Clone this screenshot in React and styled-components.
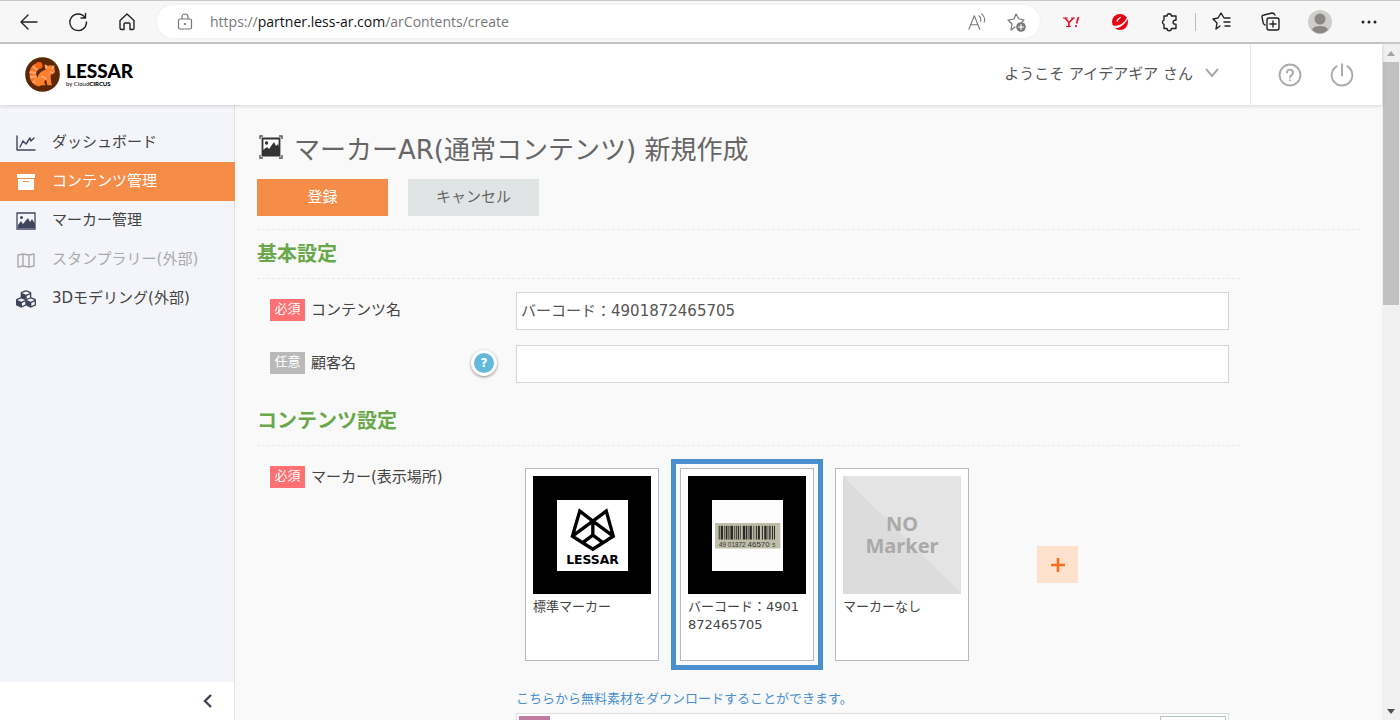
import { useState } from "react";
import styled, { createGlobalStyle } from "styled-components";
import { FaCubes } from "react-icons/fa";

const GlobalStyle = createGlobalStyle`
  * {
    box-sizing: border-box;
  }
  body {
    margin: 0;
    background: #f9f9f9;
    color: #444;
    font-family: "DejaVu Sans", "Noto Sans CJK JP", sans-serif;
    font-size: 15px;
  }
  button,
  input {
    font-family: inherit;
  }
`;

const Window = styled.div`
  display: flex;
  flex-direction: column;
  height: 100vh;
  overflow: hidden;
`;

/* ---------- browser bar ---------- */

const BrowserBar = styled.div`
  flex: none;
  display: flex;
  align-items: center;
  height: 44px;
  padding: 0 19px 0 17px;
  background: #f7f7f7;
  border-top: 1px solid #c8c8c8;
  border-bottom: 2px solid #c8c8c8;
`;

const BarGroup = styled.div`
  display: flex;
  align-items: center;
  gap: 25px;
`;

const BarButton = styled.button`
  display: flex;
  align-items: center;
  justify-content: center;
  width: 24px;
  height: 26px;
  padding: 0;
  border: 0;
  background: none;
  color: ${(p) => p.$color || "#222"};
`;

const BarLine = styled.div`
  width: 1px;
  height: 18px;
  margin: 0 14px;
  background: #bbb;
`;

const AddressBar = styled.div`
  flex: 1;
  display: flex;
  align-items: center;
  height: 33px;
  margin: 0 19px 0 18px;
  padding: 0 12px 0 16px;
  border-radius: 17px;
  background: #fff;
  box-shadow: 0 0 3px rgba(0, 0, 0, 0.06);
`;

const Address = styled.span`
  flex: 1;
  margin-left: 13px;
  font-family: "Open Sans", sans-serif;
  font-size: 14px;
  color: #777;

  & b {
    font-weight: 400;
    color: #111;
  }
`;

const AddressIcons = styled.div`
  display: flex;
  gap: 15px;
`;

/* ---------- page frame ---------- */

const Viewport = styled.div`
  flex: 1;
  display: flex;
  min-height: 0;
`;

const Page = styled.div`
  flex: 1;
  display: flex;
  flex-direction: column;
  min-width: 0;
`;

const Header = styled.header`
  flex: none;
  display: flex;
  align-items: center;
  height: 61px;
  padding-left: 25px;
  background: #fff;
  box-shadow: 0 1px 4px rgba(0, 0, 0, 0.15);
  z-index: 1;
`;

const Logo = styled.a`
  display: flex;
  align-items: center;
  gap: 6px;
  margin-right: auto;
  color: #000;
  text-decoration: none;
`;

const LogoText = styled.span`
  display: flex;
  flex-direction: column;
  font-family: Lato, sans-serif;
  font-size: 19px;
  font-weight: 900;
  line-height: 18px;

  & small {
    font-size: 6px;
    line-height: 7px;
    font-weight: 400;
  }
  & small b {
    font-weight: 900;
  }
`;

const UserMenu = styled.button`
  display: flex;
  align-items: center;
  gap: 12px;
  padding: 0 0 4px;
  margin-right: 31px;
  border: 0;
  background: none;
  font-size: 15px;
  color: #555;
`;

const HeaderIcons = styled.div`
  display: flex;
  align-items: center;
  gap: 28px;
  height: 61px;
  padding: 0 28px 0 27px;
  border-left: 1px solid #e6e6e6;
`;

const IconButton = styled.button`
  display: flex;
  padding: 0;
  border: 0;
  background: none;
  color: #aaa;
`;

const Body = styled.div`
  flex: 1;
  display: flex;
  min-height: 0;
`;

const Sidebar = styled.aside`
  flex: none;
  display: flex;
  flex-direction: column;
  width: 235px;
  background: #f4f5fa;
  border-right: 1px solid #dfe0e8;
`;

const Nav = styled.nav`
  flex: 1;
  padding-top: 18px;
`;

const NavItem = styled.a`
  display: flex;
  align-items: center;
  gap: 16px;
  height: 39px;
  margin-right: -1px;
  padding-left: 16px;
  background: ${(p) => (p.$active ? "#f58d48" : "none")};
  color: ${(p) => (p.$active ? "#fff" : p.$dim ? "#aaa" : "#444")};
  line-height: 20px;
  text-decoration: none;

  & span {
    padding-bottom: 2px;
  }
  & svg {
    width: 20px;
    height: 20px;
    color: ${(p) => (p.$active ? "#fff" : p.$dim ? "#aaa" : "#40455c")};
  }
`;

const Collapse = styled.button`
  display: flex;
  align-items: center;
  justify-content: flex-end;
  height: 38px;
  padding: 0 20px;
  border: 0;
  background: #fff;
  color: #40455c;
`;

const Main = styled.main`
  flex: 1;
  min-width: 0;
  padding: 22px 22px 0;
  overflow: hidden;
`;

const Title = styled.h1`
  display: flex;
  align-items: center;
  gap: 11px;
  height: 40px;
  margin: 0 0 12px;
  padding-left: 2px;
  font-size: 26px;
  font-weight: 400;
  color: #666;
`;

const Actions = styled.div`
  display: flex;
  gap: 20px;
  padding-bottom: 13px;
  border-bottom: 1px dashed #e8e8e8;
`;

const Button = styled.button`
  width: 131px;
  height: 37px;
  padding: 0 0 4px;
  border: 0;
  background: ${(p) => (p.$primary ? "#f58d48" : "#e0e4e5")};
  color: ${(p) => (p.$primary ? "#fff" : "#666")};
  font-size: 15px;
`;

/* ---------- form ---------- */

const Section = styled.section`
  max-width: 983px;
`;

const SectionTitle = styled.h2`
  height: 49px;
  margin: 0;
  border-bottom: 1px dashed #e8e8e8;
  font-size: 20px;
  line-height: 49px;
  color: #6aa84c;
`;

const Rows = styled.div`
  display: flex;
  flex-direction: column;
  gap: 15px;
  padding: 13px 11px 14px 13px;
`;

const Row = styled.div`
  display: flex;
  align-items: flex-start;
`;

const RowHead = styled.div`
  flex: none;
  display: flex;
  align-items: center;
  width: 246px;
  height: 36px;
  padding-right: 19px;
  line-height: 20px;
`;

const Badge = styled.span`
  width: 35px;
  height: 22px;
  margin-right: 6px;
  background: ${(p) => (p.$required ? "#ff7072" : "#b9b9b9")};
  color: #fff;
  font-size: 13px;
  line-height: 20px;
  text-align: center;
`;

const Label = styled.label`
  flex: 1;
`;

const Help = styled.button`
  width: 26px;
  height: 26px;
  padding: 0;
  border: 3px solid #fff;
  border-radius: 50%;
  background: #63b9db;
  box-shadow: 0 1px 3px rgba(0, 0, 0, 0.45);
  color: #fff;
  font-size: 12px;
  font-weight: 700;
  line-height: 20px;
`;

const TextInput = styled.input`
  flex: 1;
  min-width: 0;
  height: 38px;
  padding: 0 4px 3px;
  border: 1px solid #d5d5d5;
  background: #fff;
  color: #555;
  font-size: 15px;
`;

const Field = styled.div`
  flex: 1;
  min-width: 0;
`;

const Markers = styled.div`
  display: flex;
  align-items: center;
  gap: 3px;
`;

const Card = styled.button`
  width: 152px;
  padding: 4px;
  border: 5px solid ${(p) => (p.$selected ? "#4a90ce" : "transparent")};
  background: none;
  color: #444;
  font-size: 13px;
  line-height: 18px;
  text-align: left;
`;

const CardBox = styled.span`
  display: block;
  min-height: 193px;
  padding: 7px;
  border: 1px solid #b8b8b8;
  background: #fff;
`;

const CardName = styled.span`
  display: block;
  margin-top: 4px;
  word-break: break-all;
`;

const Thumb = styled.span`
  display: flex;
  flex-direction: column;
  align-items: center;
  justify-content: center;
  height: 118px;
  background: #000;
`;

const NoMarker = styled(Thumb)`
  background: linear-gradient(to top right, #dcdcdc 50%, #e4e4e4 50%);
  color: #aaa;
  font-family: "Noto Sans", sans-serif;
  font-size: 20px;
  font-weight: 700;
  line-height: 22px;
`;

const AddButton = styled.button`
  display: flex;
  align-items: center;
  justify-content: center;
  width: 41px;
  height: 37px;
  margin-left: 56px;
  padding: 0;
  border: 0;
  background: #ffe0cc;
`;

const DownloadLink = styled.a`
  display: block;
  margin-top: 19px;
  font-size: 13px;
  line-height: 20px;
  color: #4a90ce;
  text-decoration: none;
`;

const Material = styled.div`
  display: flex;
  justify-content: space-between;
  height: 60px;
  margin-top: 4px;
  padding: 2px;
  border: 1px solid #ddd;
  background: #fff;
`;

const Swatch = styled.div`
  width: 31px;
  height: 31px;
  background: #c07c9f;
`;

const MaterialButton = styled.button`
  width: 66px;
  height: 36px;
  border: 1px solid #b4c4c6;
  background: #fff;
`;

/* ---------- scroll bar ---------- */

const ScrollTrack = styled.div`
  flex: none;
  display: flex;
  flex-direction: column;
  align-items: center;
  width: 18px;
  background: #f0f0f0;
`;

const ScrollArrow = styled.div`
  display: flex;
  align-items: center;
  justify-content: center;
  height: 18px;
  color: ${(p) => p.$color};
`;

const ScrollRail = styled.div`
  flex: 1;
  width: 16px;
`;

const ScrollThumb = styled.div`
  height: 38%;
  background: #c1c1c1;
`;

function Stroke({ size = 20, width = 1.4, children }) {
  return (
    <svg
      width={size}
      height={size}
      viewBox="0 0 20 20"
      fill="none"
      stroke="currentColor"
      strokeWidth={width}
      strokeLinecap="round"
      strokeLinejoin="round"
      aria-hidden="true"
    >
      {children}
    </svg>
  );
}

function PandaLogo() {
  return (
    <svg width="35" height="35" viewBox="0 0 105 105" aria-hidden="true">
      <circle cx="52.500" cy="52.500" r="52" fill="#5c2706" />
      <path
        d="M42 26Q20 34 24 58 27 73 40 78"
        fill="none"
        stroke="#f9792b"
        strokeWidth="20"
        strokeLinecap="round"
      />
      <path
        d="M23 28l14 11M14 44l19 5M15 61l20-3M24 77l13-12"
        stroke="#fba66c"
        strokeWidth="6"
      />
      <circle cx="42" cy="25" r="10" fill="#f4640f" />
      <path
        d="M60 22l9 4c6-2 11-2 15 0l4-2 0 11c4 9 2 16-8 17l-3 3c0 10 1 20 4 30h-14l-4-18-6 8 5 10H34c-8-8-3-20 4-25 3-8 7-17 24-22-3-5-4-10-2-16z"
        fill="#ff8130"
      />
      <path
        d="M61 25l5 9M86 28l-6 8M75 44l8 4M48 60c8-3 14 2 14 8"
        fill="none"
        stroke="#fbb687"
        strokeWidth="4"
      />
    </svg>
  );
}

function PictureIcon() {
  return (
    <svg viewBox="0 0 20 20" aria-hidden="true">
      <path d="M1 2h18v16H1z" fill="none" stroke="currentColor" strokeWidth="1.300" />
      <circle cx="5.500" cy="6.500" r="1.500" fill="currentColor" />
      <path d="M2 17v-3l3-4 2 3 5-6 2 4 2-3 3 5v4z" fill="currentColor" />
    </svg>
  );
}

function FramedPictureIcon() {
  return (
    <svg width="24" height="24" viewBox="0 0 24 24" aria-hidden="true">
      <path
        d="M1 4V1h3M20 1h3v3M23 20v3h-3M4 23H1v-3"
        fill="none"
        stroke="#555"
        strokeWidth="1.400"
      />
      <path d="M3.500 3.500h17v17h-17z" fill="#fff" stroke="#333" strokeWidth="1.800" />
      <circle cx="7.500" cy="8" r="1.700" fill="#333" />
      <path d="M4 20v-5l4-3 2 2 5-7 2 4 2-2 1 3v8z" fill="#333" />
    </svg>
  );
}

function ChartIcon() {
  return (
    <Stroke>
      <path d="M1 3v14h18" />
      <path d="M4 14l3-6 3 3 4-6 1 3 3-3" />
    </Stroke>
  );
}

function ArchiveIcon() {
  return (
    <svg viewBox="0 0 20 20" fill="currentColor" aria-hidden="true">
      <path d="M1 2h18v4H1z" />
      <path
        fillRule="evenodd"
        d="M2 7h16v10a1 1 0 0 1-1 1H3a1 1 0 0 1-1-1zM7 9v1h6V9z"
      />
    </svg>
  );
}

function MapIcon() {
  return (
    <Stroke>
      <path d="M2 5l5-1 6 1 5-1v12l-5 1-6-1-5 1zM7 4v12M13 5v12" />
    </Stroke>
  );
}

function FoxMarker() {
  return (
    <svg width="71" height="71" viewBox="0 0 212 212" role="img" aria-label="LESSAR">
      <path fill="#fff" d="M0 0h212v212H0z" />
      <path
        d="M107 63L68 33 46 108 107 147 168 108 147 33zM107 63L46 108M107 63L168 108M107 63V104M77 127L107 105 137 127"
        fill="none"
        stroke="#000"
        strokeWidth="10"
      />
      <text
        x="106"
        y="191"
        fontFamily="DejaVu Sans"
        fontWeight="700"
        fontSize="37"
        textAnchor="middle"
      >
        LESSAR
      </text>
    </svg>
  );
}

const bars = [
  [20, 3], [26, 7], [36, 2], [41, 5], [49, 3], [55, 8], [66, 2], [71, 3],
  [77, 4], [84, 2], [92, 7], [101, 4], [107, 2], [112, 7], [124, 2], [131, 3],
  [137, 6], [149, 3], [156, 7], [166, 2], [171, 4], [179, 3], [185, 3],
];

function BarcodeMarker() {
  return (
    <svg width="71" height="71" viewBox="0 0 212 212" aria-hidden="true">
      <path fill="#fdfdfd" d="M0 0h212v212H0z" />
      <path fill="#bfbea8" d="M9 69h195v76H9z" />
      {bars.map(([x, w]) => (
        <rect key={x} x={x} y="77" width={w} height="41" fill="#2b2926" />
      ))}
      <g fontFamily="Liberation Sans" fill="#333">
        <text x="21" y="140" fontSize="19">49 01872</text>
        <text x="106" y="140" fontSize="24">46570</text>
        <text x="180" y="140" fontSize="17">5</text>
      </g>
    </svg>
  );
}

const navItems = [
  { name: "ダッシュボード", icon: <ChartIcon /> },
  { name: "コンテンツ管理", icon: <ArchiveIcon />, active: true },
  { name: "マーカー管理", icon: <PictureIcon /> },
  { name: "スタンプラリー(外部)", icon: <MapIcon />, dim: true },
  { name: "3Dモデリング(外部)", icon: <FaCubes /> },
];

const markers = [
  { name: "標準マーカー", thumb: <Thumb><FoxMarker /></Thumb> },
  { name: "バーコード：4901872465705", thumb: <Thumb><BarcodeMarker /></Thumb> },
  {
    name: "マーカーなし",
    thumb: (
      <NoMarker>
        <span>NO</span>
        <span>Marker</span>
      </NoMarker>
    ),
  },
];

function Browser() {
  return (
    <BrowserBar>
      <BarGroup>
        <BarButton aria-label="戻る">
          <Stroke>
            <path d="M18 10H2M9 3l-7 7 7 7" />
          </Stroke>
        </BarButton>
        <BarButton aria-label="更新">
          <Stroke>
            <path d="M17 5.500A8.300 8.300 0 1 0 18.500 10M17.500 1.500v4.500H13" />
          </Stroke>
        </BarButton>
        <BarButton aria-label="ホーム">
          <Stroke>
            <path d="M3 8.500L10 2l7 6.500V16q0 1.500-1.500 1.500H13V12q0-1-1-1H8q-1 0-1 1v5.500H4.500Q3 17.500 3 16z" />
          </Stroke>
        </BarButton>
      </BarGroup>
      <AddressBar>
        <BarButton $color="#777" aria-label="サイト情報">
          <Stroke width={1.2}>
            <path d="M5 7h10q1.500 0 1.500 1.500v7q0 1.500-1.500 1.500H5q-1.500 0-1.500-1.500v-7Q3.500 7 5 7zM7 7V5a3 3 0 0 1 6 0v2" />
            <circle cx="10" cy="12" r=".5" fill="currentColor" />
          </Stroke>
        </BarButton>
        <Address>
          https://<b>partner.less-ar.com</b>/arContents/create
        </Address>
        <AddressIcons>
          <BarButton $color="#777" aria-label="音声で読み上げる">
            <Stroke size={18} width={1.2}>
              <path d="M1 18L7 3l6 15M3 13h8M12 3q3 2 2 6M15 1q5 4 3 9" />
            </Stroke>
          </BarButton>
          <BarButton $color="#777" aria-label="お気に入りに追加">
            <Stroke width={1.2}>
              <path d="M9 15l-4 3 1-6-4-4 6-1 2-5 3 5 5 1-2 2" />
              <circle cx="15" cy="15" r="4.800" fill="currentColor" stroke="none" />
              <path d="M15 12.500v5M12.500 15h5" stroke="#fff" />
            </Stroke>
          </BarButton>
        </AddressIcons>
      </AddressBar>
      <BarGroup>
        <BarButton $color="#e8112d" aria-label="Yahoo!">
          <svg width="18" height="12" viewBox="0 0 18 12" fill="none" stroke="currentColor" aria-hidden="true">
            <path d="M1 2h5M9 2h4M4 10.500h5" strokeWidth="1.200" />
            <path d="M3 2l4 4.500v4M11.500 2L7 6.500" strokeWidth="1.700" />
            <path d="M16.500 1l-2 6.500M14 9v2" strokeWidth="1.700" />
          </svg>
        </BarButton>
        <BarButton $color="#e60012" aria-label="ウイルスバスター">
          <svg width="18" height="18" viewBox="0 0 18 18" aria-hidden="true">
            <circle cx="9" cy="9" r="8" fill="currentColor" />
            <path d="M10 4Q5 6 6 9M1 13Q11 15 17 4Q14 13 5 15z" fill="#fff" stroke="#fff" strokeWidth=".8" />
          </svg>
        </BarButton>
        <BarButton aria-label="拡張機能">
          <Stroke>
            <path d="M5 4h3a2.200 2.200 0 0 1 4.400 0H17v4.300h-1a1.900 1.900 0 0 0 0 3.800h1v4.400h-4.600a2.200 2.200 0 0 1-4.400 0H5v-4.200a2.200 2.200 0 0 1 0-4.200z" />
          </Stroke>
        </BarButton>
      </BarGroup>
      <BarLine />
      <BarGroup>
        <BarButton aria-label="お気に入り">
          <Stroke>
            <path d="M8 14l-4 3 1-6-4-4 5-1 3-5 3 5h6M12 10h6M13 14h5" />
          </Stroke>
        </BarButton>
        <BarButton aria-label="コレクション">
          <Stroke>
            <path d="M4 13Q2 12 2 10L1 5q0-2 2-2l8-2q2 0 3 2M8 6h8q2 0 2 2v8q0 2-2 2H8q-2 0-2-2V8q0-2 2-2zM12 9v6M9 12h6" />
          </Stroke>
        </BarButton>
        <BarButton aria-label="プロファイル">
          <svg width="24" height="24" viewBox="0 0 24 24" aria-hidden="true">
            <circle cx="12" cy="12" r="12" fill="#d0cecb" />
            <circle cx="12" cy="9" r="5.500" fill="#8a8886" />
            <path d="M4 20q1-4 8-4t8 4q-8 7-16 0z" fill="#8a8886" />
          </svg>
        </BarButton>
        <BarButton aria-label="設定など">
          <svg width="16" height="4" viewBox="0 0 16 4" fill="#222" aria-hidden="true">
            <circle cx="2" cy="2" r="1.500" />
            <circle cx="8" cy="2" r="1.500" />
            <circle cx="14" cy="2" r="1.500" />
          </svg>
        </BarButton>
      </BarGroup>
    </BrowserBar>
  );
}

function TopHeader() {
  return (
    <Header>
      <Logo href="#">
        <PandaLogo />
        <LogoText>
          LESSAR
          <small>
            by Cloud<b>CIRCUS</b>
          </small>
        </LogoText>
      </Logo>
      <UserMenu>
        ようこそ アイデアギア さん
        <svg width="14" height="9" viewBox="0 0 14 9" fill="none" stroke="#aaa" strokeWidth="2" aria-hidden="true">
          <path d="M1 1l6 7 6-7" />
        </svg>
      </UserMenu>
      <HeaderIcons>
        <IconButton aria-label="ヘルプ">
          <Stroke size={24} width={1.6}>
            <circle cx="10" cy="10" r="8.700" />
            <path d="M7.500 8a2.500 2.500 0 1 1 3.500 2.300q-1 .5-1 1.700M10 14.300v.2" />
          </Stroke>
        </IconButton>
        <IconButton aria-label="ログアウト">
          <Stroke size={24} width={1.6}>
            <path d="M10 1v9.500M5.500 2.800a8.600 8.600 0 1 0 9 0" />
          </Stroke>
        </IconButton>
      </HeaderIcons>
    </Header>
  );
}

export default function App() {
  const [contentName, setContentName] = useState("バーコード：4901872465705");
  const [customer, setCustomer] = useState("");
  const [selected, setSelected] = useState(1);

  return (
    <Window>
      <GlobalStyle />
      <Browser />
      <Viewport>
        <Page>
          <TopHeader />
          <Body>
            <Sidebar>
              <Nav>
                {navItems.map((item) => (
                  <NavItem key={item.name} href="#" $active={item.active} $dim={item.dim}>
                    {item.icon}
                    <span>{item.name}</span>
                  </NavItem>
                ))}
              </Nav>
              <Collapse aria-label="メニューを閉じる">
                <svg width="12" height="14" viewBox="0 0 12 14" fill="none" stroke="currentColor" strokeWidth="2.400" aria-hidden="true">
                  <path d="M9 1L3 7l6 6" />
                </svg>
              </Collapse>
            </Sidebar>

            <Main>
              <Title>
                <FramedPictureIcon />
                マーカーAR(通常コンテンツ) 新規作成
              </Title>
              <Actions>
                <Button $primary>登録</Button>
                <Button>キャンセル</Button>
              </Actions>

              <Section>
                <SectionTitle>基本設定</SectionTitle>
                <Rows>
                  <Row>
                    <RowHead>
                      <Badge $required>必須</Badge>
                      <Label htmlFor="contentName">コンテンツ名</Label>
                    </RowHead>
                    <TextInput
                      id="contentName"
                      value={contentName}
                      onChange={(e) => setContentName(e.target.value)}
                    />
                  </Row>
                  <Row>
                    <RowHead>
                      <Badge>任意</Badge>
                      <Label htmlFor="customer">顧客名</Label>
                      <Help>?</Help>
                    </RowHead>
                    <TextInput
                      id="customer"
                      value={customer}
                      onChange={(e) => setCustomer(e.target.value)}
                    />
                  </Row>
                </Rows>
              </Section>

              <Section>
                <SectionTitle>コンテンツ設定</SectionTitle>
                <Rows>
                  <Row>
                    <RowHead>
                      <Badge $required>必須</Badge>
                      <span id="markerLabel">マーカー(表示場所)</span>
                    </RowHead>
                    <Field>
                      <Markers role="group" aria-labelledby="markerLabel">
                        {markers.map((marker, i) => (
                          <Card
                            key={marker.name}
                            $selected={i === selected}
                            aria-pressed={i === selected}
                            onClick={() => setSelected(i)}
                          >
                            <CardBox>
                              {marker.thumb}
                              <CardName>{marker.name}</CardName>
                            </CardBox>
                          </Card>
                        ))}
                        <AddButton aria-label="マーカーを追加">
                          <svg width="14" height="14" viewBox="0 0 14 14" stroke="#f4701c" strokeWidth="2.600" aria-hidden="true">
                            <path d="M7 0v14M0 7h14" />
                          </svg>
                        </AddButton>
                      </Markers>
                      <DownloadLink href="#">
                        こちらから無料素材をダウンロードすることができます。
                      </DownloadLink>
                      <Material>
                        <Swatch />
                        <MaterialButton aria-label="素材を選択" />
                      </Material>
                    </Field>
                  </Row>
                </Rows>
              </Section>
            </Main>
          </Body>
        </Page>
        <ScrollTrack>
          <ScrollArrow $color="#a3a3a3">
            <svg width="8" height="5" viewBox="0 0 8 5" fill="currentColor" aria-hidden="true">
              <path d="M0 5l4-5 4 5z" />
            </svg>
          </ScrollArrow>
          <ScrollRail>
            <ScrollThumb />
          </ScrollRail>
          <ScrollArrow $color="#505050">
            <svg width="8" height="5" viewBox="0 0 8 5" fill="currentColor" aria-hidden="true">
              <path d="M0 0l4 5 4-5z" />
            </svg>
          </ScrollArrow>
        </ScrollTrack>
      </Viewport>
    </Window>
  );
}
